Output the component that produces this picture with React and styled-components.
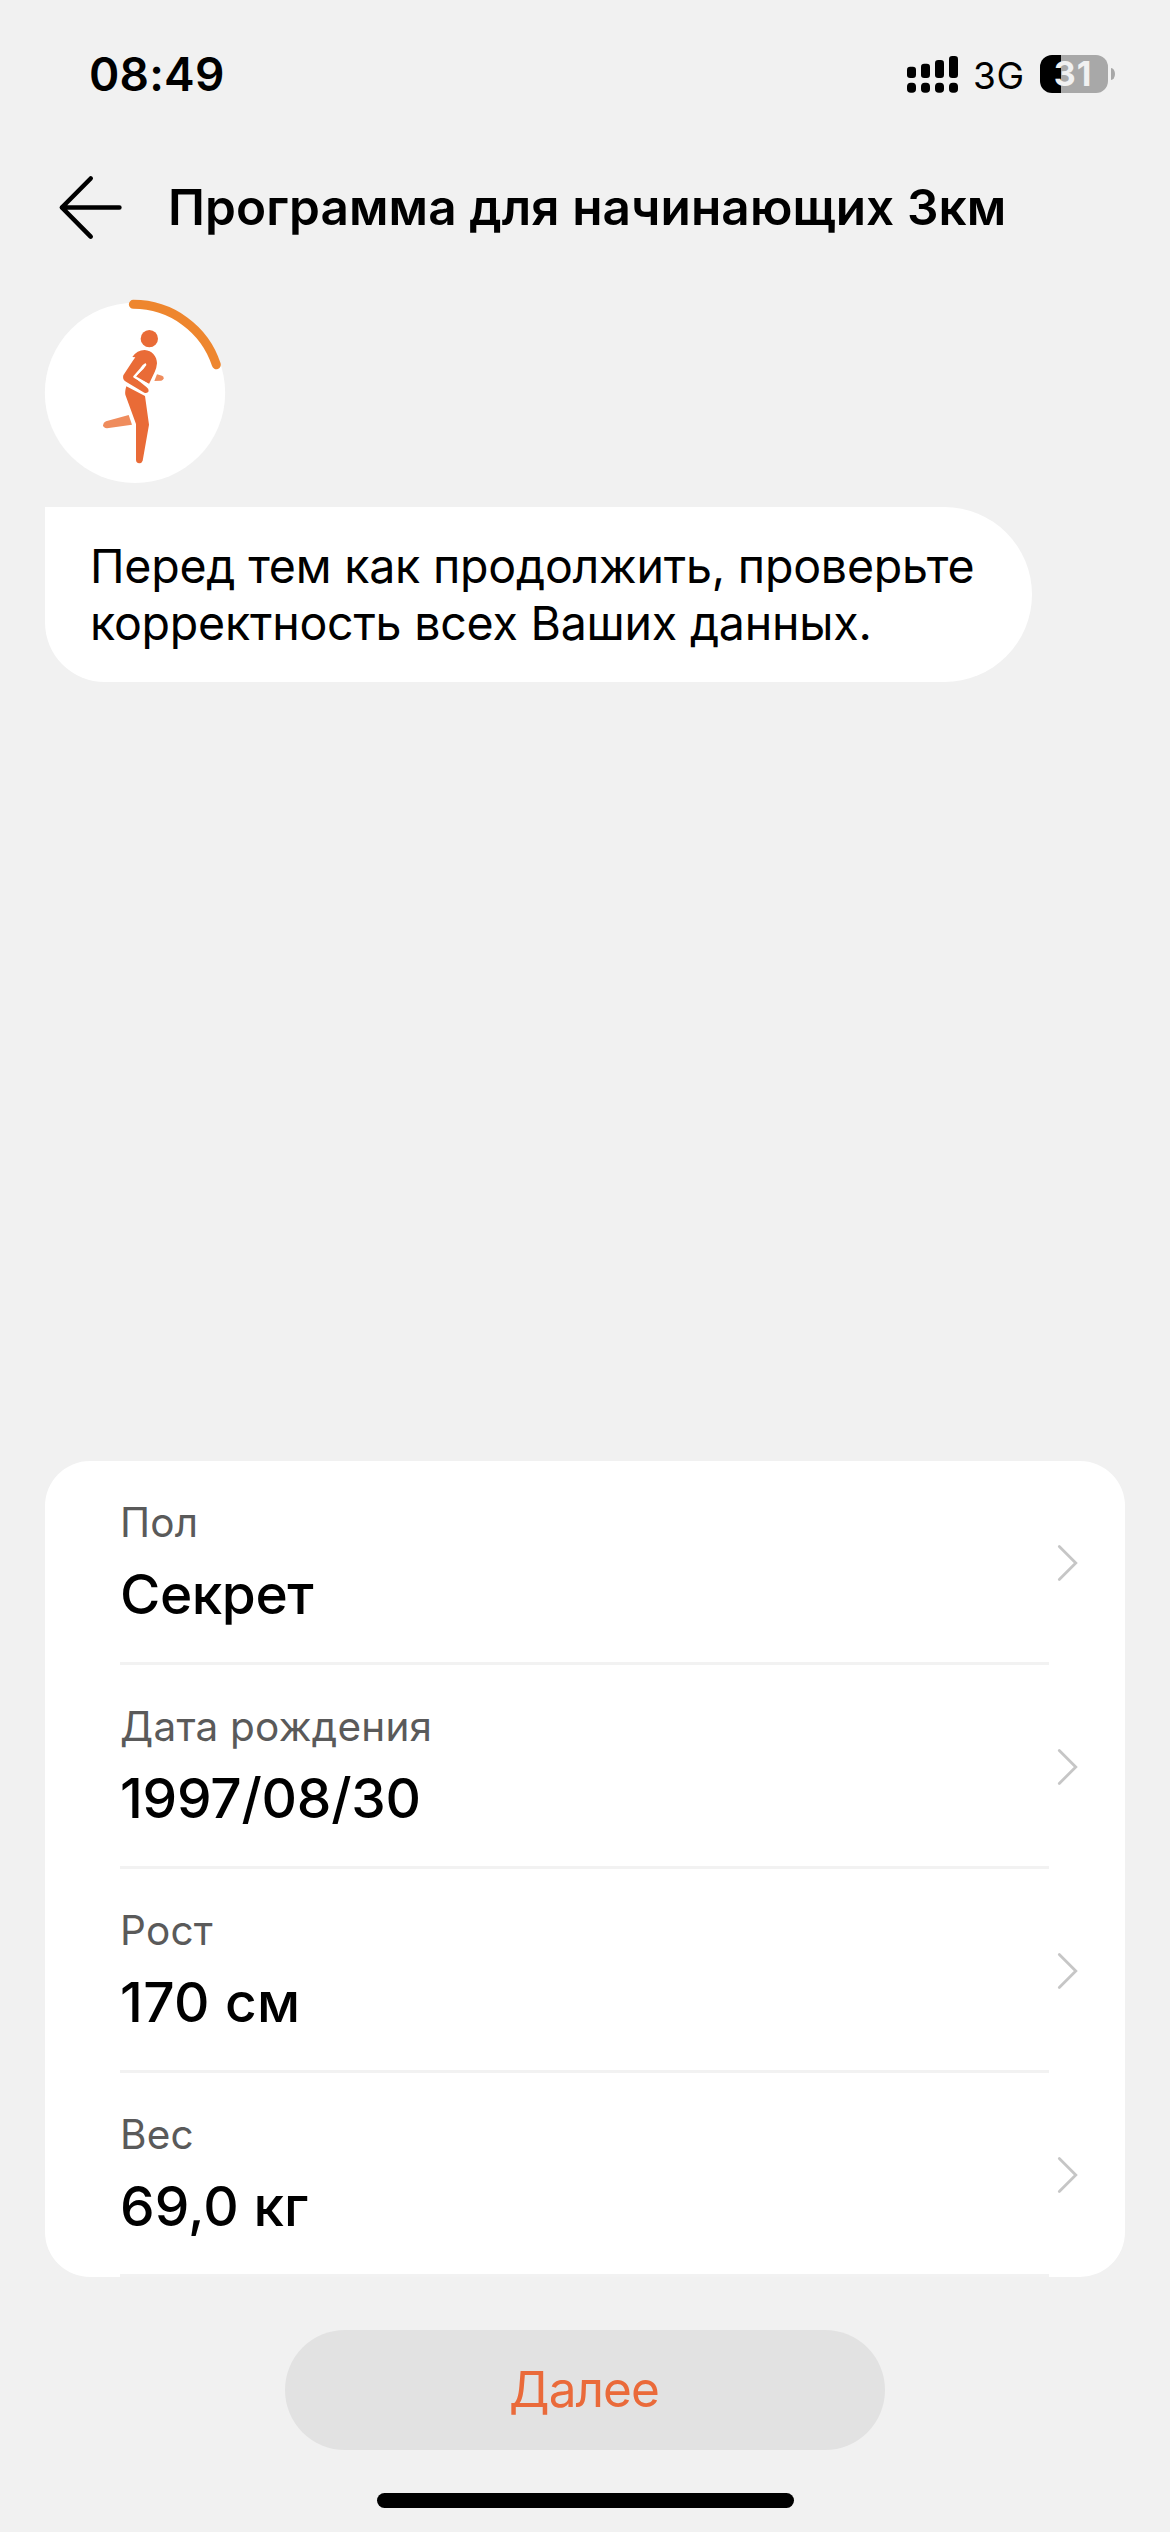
import React from "react";
import styled, { createGlobalStyle } from "styled-components";

const Global = createGlobalStyle`
  * { box-sizing: border-box; }
  body { margin: 0; background: #f1f1f1; }
`;

const Screen = styled.div`
  width: 1170px;
  height: 2532px;
  display: flex;
  flex-direction: column;
  background: #f1f1f1;
  color: #000;
  font-family: Inter, "Liberation Sans", sans-serif;
  overflow: hidden;
`;

const StatusBar = styled.header`
  height: 148px;
  padding: 0 55px 0 89px;
  display: flex;
  justify-content: space-between;
  align-items: center;
`;

const Clock = styled.time`
  font-size: 46px;
  line-height: 56px;
  font-weight: 600;
  letter-spacing: 0.2px;
`;

const StatusIcons = styled.div`
  display: flex;
  align-items: center;
`;

const Network = styled.span`
  width: 53px;
  margin: 3px 14px 0;
  font-size: 37px;
  line-height: 44px;
  letter-spacing: 0.6px;
`;

const Battery = styled.div`
  width: 68px;
  height: 38px;
  padding-right: 2px;
  border-radius: 12px;
  background: linear-gradient(to right, #000 21px, #a8a8a8 21px);
  color: #f1f1f1;
  display: flex;
  align-items: center;
  justify-content: center;
  font-size: 34px;
  line-height: 38px;
  font-weight: 700;
  letter-spacing: 1px;
`;

const BatteryTip = styled.div`
  width: 4px;
  height: 12px;
  margin-left: 3px;
  border-radius: 0 4px 4px 0 / 0 6px 6px 0;
  background: #a8a8a8;
`;

const TitleBar = styled.div`
  height: 118px;
  padding-left: 57px;
  display: flex;
  align-items: center;
`;

const Title = styled.h1`
  margin: 0 0 0 45px;
  font-size: 49.5px;
  line-height: 60px;
  font-weight: 600;
  letter-spacing: 0.1px;
  white-space: nowrap;
`;

const Chat = styled.section`
  padding: 14px 0 0 30px;
  display: flex;
  flex-direction: column;
  align-items: flex-start;
`;

const Bubble = styled.p`
  margin: 7px 0 0 15px;
  width: 987px;
  height: 175px;
  padding: 31px 0 0 45px;
  background: #fff;
  border-radius: 0 88px 88px 60px;
  font-size: 46.5px;
  line-height: 57px;
  letter-spacing: -0.22px;
  white-space: nowrap;
`;

const Spacer = styled.div`
  flex: 1;
`;

const Card = styled.section`
  margin: 0 45px;
  height: 816px;
  border-radius: 45px;
  background: #fff;
`;

const Row = styled.div`
  height: 204px;
  padding: 0 45px 0 75px;
  display: flex;
`;

const Fields = styled.div`
  width: 930px;
  border-bottom: 3px solid #f2f2f2;
  padding-top: 37px;
`;

const Label = styled.div`
  font-size: 40.5px;
  line-height: 50px;
  letter-spacing: 0.23px;
  color: #5a5a5a;
`;

const Value = styled.div`
  margin-top: 13px;
  font-size: 55px;
  line-height: 67px;
  font-weight: 500;
  letter-spacing: ${(p) => p.$tracking}px;
`;

const Chevron = styled.svg`
  margin: 83px 0 0 7px;
`;

const NextButton = styled.button`
  margin: 53px auto 0;
  width: 600px;
  height: 120px;
  padding: 0 2px 2px 0;
  border: 0;
  border-radius: 60px;
  background: #e2e2e2;
  color: #ea6a3a;
  font: 400 49.5px/118px Inter, "Liberation Sans", sans-serif;
  letter-spacing: -0.9px;
`;

const HomeIndicator = styled.div`
  margin: 43px auto 24px;
  width: 417px;
  height: 15px;
  border-radius: 8px;
  background: #000;
`;

const signalTops = [11.7, 8.7, 5, 1];

const rows = [
  { label: "Пол", value: "Секрет", tracking: -0.45 },
  { label: "Дата рождения", value: "1997/08/30", tracking: -0.25 },
  { label: "Рост", value: "170 см", tracking: 0.35 },
  { label: "Вес", value: "69,0 кг", tracking: 0.05 },
];

function Signal() {
  return (
    <svg width="53" height="38" viewBox="0 0 53 38">
      {signalTops.map((y, i) => (
        <g key={y}>
          <rect x={1 + i * 14} y={y} width="9" height={23 - y} rx="3.2" />
          <rect x={1 + i * 14} y="27.7" width="9" height="10" rx="3.8" />
        </g>
      ))}
    </svg>
  );
}

function BackArrow() {
  return (
    <svg width="66" height="66" viewBox="0 0 66 66" fill="none" stroke="#000" strokeWidth="4.6" strokeLinecap="round" strokeLinejoin="round">
      <path d="M33.7 4.5 4.9 33.5 33.7 62.6M4.9 33.5H62.4" />
    </svg>
  );
}

function Runner() {
  return (
    <svg width="220" height="220" viewBox="0 0 660 660">
      <circle cx="315" cy="338.5" r="270.5" fill="#fff" />
      <path d="M310 73A262 262 0 0 1 559 254" fill="none" stroke="#ee862e" strokeWidth="27" strokeLinecap="round" />
      <g fill="#e96b37">
        <circle cx="358" cy="176" r="26" />
        <path d="M307 231Q321 210 344 210C366 211 381 229 381 250Q380 264 374 276L357 312 315 291 341 266Q349 259 348 252Q340 256 335 264L312 291 350 322Q358 328 356 334Q352 341 343 338L288 305Q276 299 280 286L308 243L316 232Z" />
        <path d="M289 319 345 348 357 434 338 542Q335 550 328 550Q318 549 318 539V432L286 344Q284 336 289 319Z" />
      </g>
      <path d="M348 252Q340 256 334 266L313 290 356 315" fill="none" stroke="#fff" strokeWidth="7" strokeLinejoin="round" />
      <g fill="#ef8c5d">
        <path d="M296 405 306 434 231 445Q220 444 219 436Q220 427 228 424Z" />
        <path d="M381 283 396 287Q402 289 401 295Q400 301 394 302L373 303Z" />
      </g>
    </svg>
  );
}

export default function App() {
  return (
    <Screen>
      <Global />
      <StatusBar>
        <Clock>08:49</Clock>
        <StatusIcons>
          <Signal />
          <Network>3G</Network>
          <Battery>31</Battery>
          <BatteryTip />
        </StatusIcons>
      </StatusBar>
      <TitleBar>
        <BackArrow />
        <Title>Программа для начинающих 3км</Title>
      </TitleBar>
      <Chat>
        <Runner />
        <Bubble>
          Перед тем как продолжить, проверьте
          <br />
          корректность всех Ваших данных.
        </Bubble>
      </Chat>
      <Spacer />
      <Card>
        {rows.map(({ label, value, tracking }) => (
          <Row key={label}>
            <Fields>
              <Label>{label}</Label>
              <Value $tracking={tracking}>{value}</Value>
            </Fields>
            <Chevron width="24" height="40" viewBox="0 0 24 40" fill="none" stroke="#c6c6c6" strokeWidth="2.8" strokeLinecap="round">
              <path d="M3.3 2.5 19.8 19 3.3 35.5" />
            </Chevron>
          </Row>
        ))}
      </Card>
      <NextButton>Далее</NextButton>
      <HomeIndicator />
    </Screen>
  );
}
